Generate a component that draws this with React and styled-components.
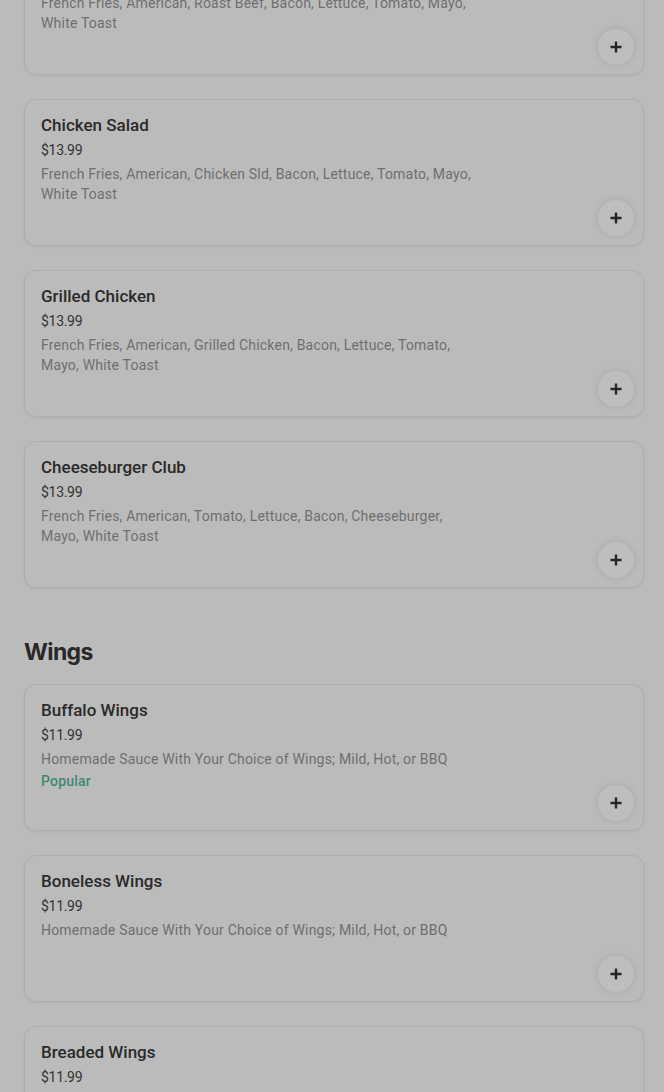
import React from "react";
import styled, { createGlobalStyle } from "styled-components";

const Global = createGlobalStyle`
  html, body { margin: 0; padding: 0; background: #bbbbbb; }
  body { font-family: Roboto, "Noto Sans", Arial, sans-serif; -webkit-font-smoothing: antialiased; }
`;

const Viewport = styled.div`
  height: 1092px;
  overflow: hidden;
  background: #bbbbbb;
`;

const Page = styled.div`
  margin-top: -72px;
  padding: 0 20px 0 24px;
  display: flex;
  flex-direction: column;
`;

const Section = styled.section`
  display: flex;
  flex-direction: column;
  gap: 24px;
  margin-top: ${(p) => p.$top || 0}px;
`;

const Heading = styled.h2`
  margin: 0 0 -8px;
  font-family: Inter, Roboto, sans-serif;
  font-size: 23px;
  line-height: 32px;
  font-weight: 700;
  color: #282828;
  letter-spacing: -0.6px;
`;

const Card = styled.div`
  position: relative;
  box-sizing: border-box;
  height: 147px;
  border: 1px solid #aeaeae;
  border-radius: 12px;
  box-shadow: 0 1px 3px rgba(0, 0, 0, 0.06);
  background: #bbbbbb;
  padding: 15px 16px;
  display: flex;
  flex-direction: column;
`;

const Info = styled.div`
  width: 440px;
  display: flex;
  flex-direction: column;
`;

const Title = styled.div`
  font-size: 17px;
  line-height: 20px;
  font-weight: 500;
  color: #2a2a2a;
`;

const Price = styled.div`
  margin-top: 5px;
  font-size: 14px;
  line-height: 20px;
  color: #333333;
  letter-spacing: -0.3px;
`;

const Desc = styled.div`
  margin-top: 4px;
  font-size: 14px;
  line-height: 20px;
  color: #6f6f6f;
  letter-spacing: 0.2px;
`;

const Badge = styled.div`
  margin-top: 2px;
  font-size: 14px;
  line-height: 20px;
  font-weight: 500;
  color: #3f8a6c;
  letter-spacing: 0.2px;
`;

const AddButton = styled.button`
  position: absolute;
  right: 9px;
  bottom: 9px;
  width: 36px;
  height: 36px;
  border-radius: 50%;
  border: none;
  padding: 0;
  background: #bebebe;
  box-shadow: 0 0 6px 1px rgba(0, 0, 0, 0.08);
  display: flex;
  align-items: center;
  justify-content: center;
  color: #262626;
`;

const Plus = () => (
  <svg width="12" height="12" viewBox="0 0 12 12" aria-hidden="true">
    <path d="M6 0.5v11M0.5 6h11" stroke="currentColor" strokeWidth="2.4" />
  </svg>
);

const Item = ({ title, price, desc, badge }) => (
  <Card>
    <Info>
      <Title>{title}</Title>
      <Price>{price}</Price>
      {desc && <Desc>{desc}</Desc>}
      {badge && <Badge>{badge}</Badge>}
    </Info>
    <AddButton aria-label="Add">
      <Plus />
    </AddButton>
  </Card>
);

const sandwiches = [
  {
    title: "Roast Beef",
    price: "$13.99",
    desc: "French Fries, American, Roast Beef, Bacon, Lettuce, Tomato, Mayo, White Toast",
  },
  {
    title: "Chicken Salad",
    price: "$13.99",
    desc: "French Fries, American, Chicken Sld, Bacon, Lettuce, Tomato, Mayo, White Toast",
  },
  {
    title: "Grilled Chicken",
    price: "$13.99",
    desc: "French Fries, American, Grilled Chicken, Bacon, Lettuce, Tomato, Mayo, White Toast",
  },
  {
    title: "Cheeseburger Club",
    price: "$13.99",
    desc: "French Fries, American, Tomato, Lettuce, Bacon, Cheeseburger, Mayo, White Toast",
  },
];

const wings = [
  {
    title: "Buffalo Wings",
    price: "$11.99",
    desc: "Homemade Sauce With Your Choice of Wings; Mild, Hot, or BBQ",
    badge: "Popular",
  },
  {
    title: "Boneless Wings",
    price: "$11.99",
    desc: "Homemade Sauce With Your Choice of Wings; Mild, Hot, or BBQ",
  },
  { title: "Breaded Wings", price: "$11.99", desc: "" },
];

export default function App() {
  return (
    <Viewport>
      <Global />
      <Page>
        <Section>
          {sandwiches.map((it) => (
            <Item key={it.title} {...it} />
          ))}
        </Section>
        <Section $top={48}>
          <Heading>Wings</Heading>
          {wings.map((it) => (
            <Item key={it.title} {...it} />
          ))}
        </Section>
      </Page>
    </Viewport>
  );
}
